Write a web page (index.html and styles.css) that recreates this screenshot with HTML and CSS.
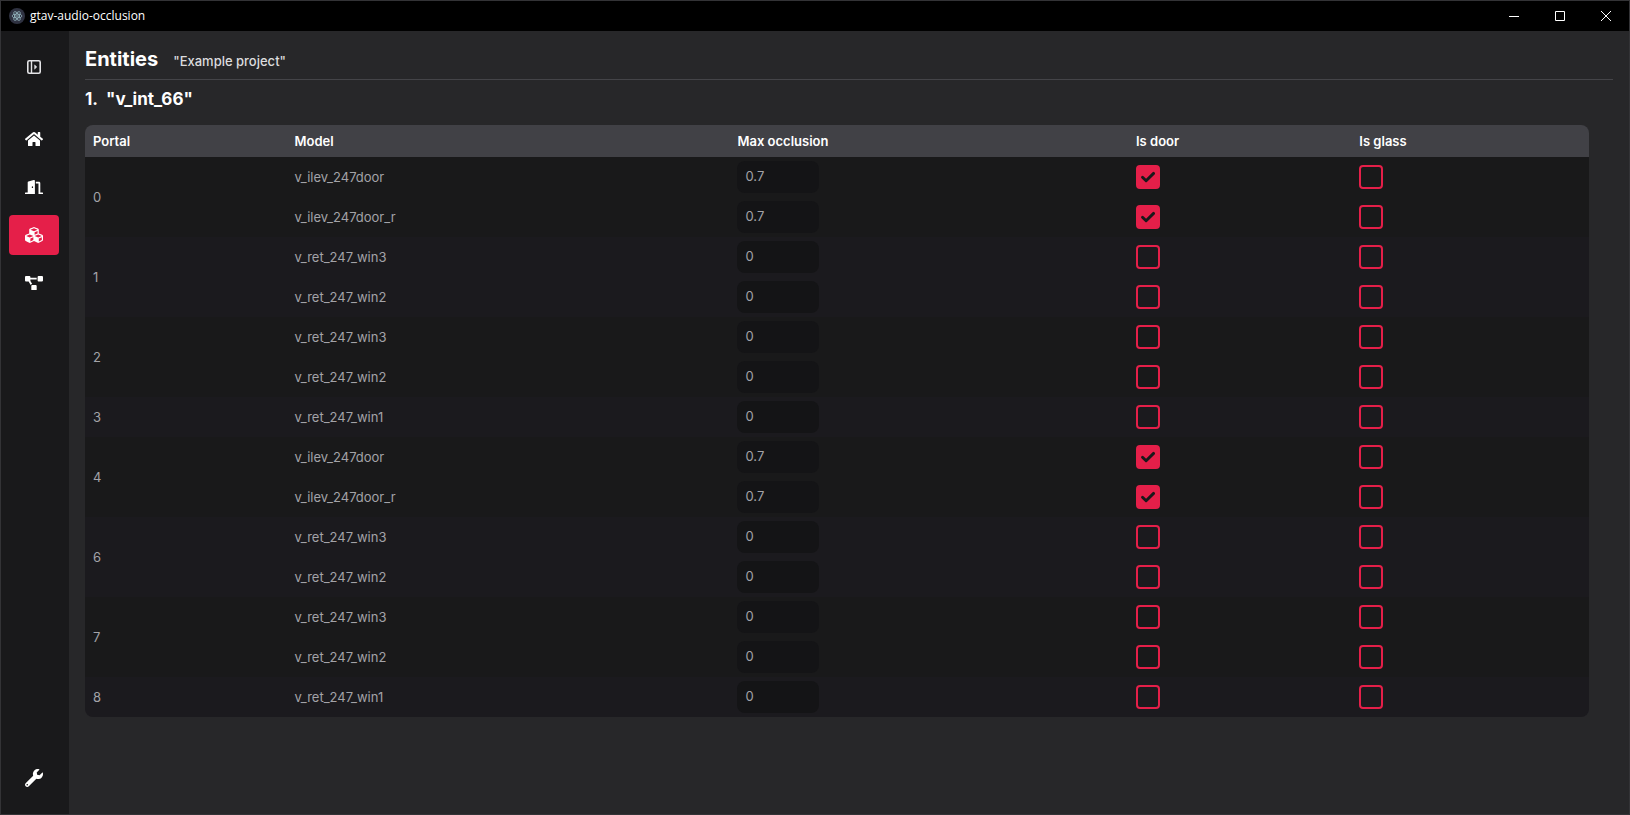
FILE: index.html
```html
<!DOCTYPE html>
<html lang="en">
<head>
<meta charset="utf-8">
<title>gtav-audio-occlusion</title>
<link rel="stylesheet" href="styles.css">
</head>
<body>
<div class="window">
  <header class="titlebar">
    <svg class="app-icon" viewBox="0 0 16 16" aria-hidden="true">
      <circle cx="8" cy="8" r="8" fill="#2f3241"/>
      <g fill="none" stroke="#9fc3cc" stroke-width="0.7">
        <ellipse cx="8" cy="8" rx="5" ry="2"/>
        <ellipse cx="8" cy="8" rx="5" ry="2" transform="rotate(60 8 8)"/>
        <ellipse cx="8" cy="8" rx="5" ry="2" transform="rotate(120 8 8)"/>
      </g>
      <circle cx="8" cy="8" r="0.8" fill="#9fc3cc"/>
    </svg>
    <span class="app-name">gtav-audio-occlusion</span>
    <div class="window-controls">
      <button class="window-button" aria-label="Minimize"><svg viewBox="0 0 10 10"><path d="M0 5.5h10"/></svg></button>
      <button class="window-button" aria-label="Maximize"><svg viewBox="0 0 10 10"><path d="M.5.5h9v9h-9z"/></svg></button>
      <button class="window-button" aria-label="Close"><svg viewBox="0 0 10 10"><path d="M0 0l10 10M10 0L0 10"/></svg></button>
    </div>
  </header>
  <div class="body">
    <nav class="sidebar">
      <button class="nav-button toggle" aria-label="Expand sidebar">
        <svg class="toggle-icon" viewBox="0 0 14 14"><rect x=".8" y=".8" width="12.4" height="12.4" rx="1.5" fill="none" stroke="currentColor" stroke-width="1.6"/><path d="M4.500 1v12" stroke="currentColor" stroke-width="1.4"/><path d="M7.600 4.800L9.800 7L7.600 9.200z" fill="currentColor" stroke="currentColor" stroke-width=".5"/></svg>
      </button>
      <button class="nav-button" aria-label="Home">
        <svg viewBox="0 0 576 512"><path d="M280.37 148.26L96 300.11V464a16 16 0 0 0 16 16l112.06-.29a16 16 0 0 0 15.92-16V368a16 16 0 0 1 16-16h64a16 16 0 0 1 16 16v95.64a16 16 0 0 0 16 16.05L464 480a16 16 0 0 0 16-16V300L295.67 148.26a12.19 12.19 0 0 0-15.3 0zM571.6 251.47L488 182.56V44.05a12 12 0 0 0-12-12h-56a12 12 0 0 0-12 12v72.61L318.47 43a48 48 0 0 0-61 0L4.34 251.47a12 12 0 0 0-1.6 16.9l25.5 31A12 12 0 0 0 45.15 301l235.22-193.74a12.19 12.19 0 0 1 15.3 0L530.9 301a12 12 0 0 0 16.9-1.6l25.5-31a12 12 0 0 0-1.7-16.93z"/></svg>
      </button>
      <button class="nav-button" aria-label="Portals">
        <svg viewBox="0 0 640 512"><path d="M624 448h-80V113.45C544 86.19 522.47 64 496 64H384v64h96v384h144c8.84 0 16-7.16 16-16v-32c0-8.84-7.16-16-16-16zM312.24 1.01l-192 49.74C105.99 54.44 96 67.7 96 82.92V448H16c-8.84 0-16 7.16-16 16v32c0 8.84 7.16 16 16 16h336V33.18c0-21.58-19.56-37.41-39.76-32.17zM264 288c-13.25 0-24-14.33-24-32s10.75-32 24-32 24 14.33 24 32-10.75 32-24 32z"/></svg>
      </button>
      <button class="nav-button active" aria-label="Entities" aria-current="page">
        <svg viewBox="0 0 512 512"><path d="M488.6 250.2L392 214V105.5c0-15-9.3-28.4-23.4-33.7l-100-37.5c-8.1-3.1-17.1-3.1-25.3 0l-100 37.5c-14.1 5.3-23.4 18.7-23.4 33.7V214l-96.6 36.2C9.3 255.5 0 268.9 0 283.9V394c0 13.6 7.7 26.1 19.9 32.2l100 50c10.1 5.1 22.1 5.1 32.2 0l103.9-52 103.9 52c10.1 5.1 22.1 5.1 32.2 0l100-50c12.2-6.1 19.9-18.6 19.9-32.2V283.9c0-15-9.3-28.4-23.4-33.7zM358 214.8l-85 31.9v-68.2l85-37v73.3zM154 104.1l102-38.2 102 38.2v.6l-102 41.4-102-41.4v-.6zm84 291.1l-85 42.5v-79.1l85-38.8v75.4zm0-112l-102 41.4-102-41.4v-.6l102-38.2 102 38.2v.6zm240 112l-85 42.5v-79.1l85-38.8v75.4zm0-112l-102 41.4-102-41.4v-.6l102-38.2 102 38.2v.6z"/></svg>
      </button>
      <button class="nav-button" aria-label="Rooms">
        <svg viewBox="0 0 640 512"><path d="M384 320H256c-17.67 0-32 14.33-32 32v128c0 17.67 14.33 32 32 32h128c17.67 0 32-14.33 32-32V352c0-17.67-14.33-32-32-32zM192 32c0-17.67-14.33-32-32-32H32C14.33 0 0 14.33 0 32v128c0 17.67 14.33 32 32 32h95.72l73.16 128.04C211.98 300.98 232.4 288 256 288h.28L192 175.51V128h224V64H192V32zM608 0H480c-17.67 0-32 14.33-32 32v128c0 17.67 14.33 32 32 32h128c17.67 0 32-14.33 32-32V32c0-17.67-14.33-32-32-32z"/></svg>
      </button>
      <button class="nav-button settings" aria-label="Settings">
        <svg viewBox="0 0 512 512"><path d="M507.73 109.1c-2.24-9.03-13.54-12.09-20.12-5.51l-74.36 74.36-67.88-11.31-11.31-67.88 74.36-74.36c6.62-6.62 3.43-17.9-5.66-20.16-47.38-11.74-99.55.91-136.58 37.93-39.64 39.64-50.55 97.1-34.05 147.2L18.74 402.76c-24.99 24.99-24.99 65.51 0 90.5 24.99 24.99 65.51 24.99 90.5 0l213.21-213.21c50.12 16.71 107.47 5.68 147.37-34.22 37.07-37.07 49.7-89.32 37.91-136.73zM64 472c-13.25 0-24-10.75-24-24 0-13.26 10.75-24 24-24s24 10.74 24 24c0 13.25-10.75 24-24 24z"/></svg>
      </button>
    </nav>
    <main class="content">
      <div class="page-header">
        <h1>Entities</h1>
        <span class="project">"Example project"</span>
      </div>
      <section class="interior">
        <h2><span>1.</span><span>"v_int_66"</span></h2>
        <table class="entities">
          <colgroup><col class="col-portal"><col class="col-model"><col class="col-occlusion"><col class="col-door"><col></colgroup>
          <thead>
            <tr><th>Portal</th><th>Model</th><th>Max occlusion</th><th>Is door</th><th>Is glass</th></tr>
          </thead>
          <tbody><tr><td rowspan="2">0</td><td>v_ilev_247door</td><td><input class="number" type="text" aria-label="Max occlusion" value="0.7"></td><td><input class="check" type="checkbox" aria-label="Is door" checked></td><td><input class="check" type="checkbox" aria-label="Is glass"></td></tr>
          <tr><td>v_ilev_247door_r</td><td><input class="number" type="text" aria-label="Max occlusion" value="0.7"></td><td><input class="check" type="checkbox" aria-label="Is door" checked></td><td><input class="check" type="checkbox" aria-label="Is glass"></td></tr></tbody>
          <tbody><tr><td rowspan="2">1</td><td>v_ret_247_win3</td><td><input class="number" type="text" aria-label="Max occlusion" value="0"></td><td><input class="check" type="checkbox" aria-label="Is door"></td><td><input class="check" type="checkbox" aria-label="Is glass"></td></tr>
          <tr><td>v_ret_247_win2</td><td><input class="number" type="text" aria-label="Max occlusion" value="0"></td><td><input class="check" type="checkbox" aria-label="Is door"></td><td><input class="check" type="checkbox" aria-label="Is glass"></td></tr></tbody>
          <tbody><tr><td rowspan="2">2</td><td>v_ret_247_win3</td><td><input class="number" type="text" aria-label="Max occlusion" value="0"></td><td><input class="check" type="checkbox" aria-label="Is door"></td><td><input class="check" type="checkbox" aria-label="Is glass"></td></tr>
          <tr><td>v_ret_247_win2</td><td><input class="number" type="text" aria-label="Max occlusion" value="0"></td><td><input class="check" type="checkbox" aria-label="Is door"></td><td><input class="check" type="checkbox" aria-label="Is glass"></td></tr></tbody>
          <tbody><tr><td>3</td><td>v_ret_247_win1</td><td><input class="number" type="text" aria-label="Max occlusion" value="0"></td><td><input class="check" type="checkbox" aria-label="Is door"></td><td><input class="check" type="checkbox" aria-label="Is glass"></td></tr></tbody>
          <tbody><tr><td rowspan="2">4</td><td>v_ilev_247door</td><td><input class="number" type="text" aria-label="Max occlusion" value="0.7"></td><td><input class="check" type="checkbox" aria-label="Is door" checked></td><td><input class="check" type="checkbox" aria-label="Is glass"></td></tr>
          <tr><td>v_ilev_247door_r</td><td><input class="number" type="text" aria-label="Max occlusion" value="0.7"></td><td><input class="check" type="checkbox" aria-label="Is door" checked></td><td><input class="check" type="checkbox" aria-label="Is glass"></td></tr></tbody>
          <tbody><tr><td rowspan="2">6</td><td>v_ret_247_win3</td><td><input class="number" type="text" aria-label="Max occlusion" value="0"></td><td><input class="check" type="checkbox" aria-label="Is door"></td><td><input class="check" type="checkbox" aria-label="Is glass"></td></tr>
          <tr><td>v_ret_247_win2</td><td><input class="number" type="text" aria-label="Max occlusion" value="0"></td><td><input class="check" type="checkbox" aria-label="Is door"></td><td><input class="check" type="checkbox" aria-label="Is glass"></td></tr></tbody>
          <tbody><tr><td rowspan="2">7</td><td>v_ret_247_win3</td><td><input class="number" type="text" aria-label="Max occlusion" value="0"></td><td><input class="check" type="checkbox" aria-label="Is door"></td><td><input class="check" type="checkbox" aria-label="Is glass"></td></tr>
          <tr><td>v_ret_247_win2</td><td><input class="number" type="text" aria-label="Max occlusion" value="0"></td><td><input class="check" type="checkbox" aria-label="Is door"></td><td><input class="check" type="checkbox" aria-label="Is glass"></td></tr></tbody>
          <tbody><tr><td>8</td><td>v_ret_247_win1</td><td><input class="number" type="text" aria-label="Max occlusion" value="0"></td><td><input class="check" type="checkbox" aria-label="Is door"></td><td><input class="check" type="checkbox" aria-label="Is glass"></td></tr></tbody>
        </table>
      </section>
    </main>
  </div>
</div>
</body>
</html>
```
FILE: styles.css
```css
* { box-sizing: border-box; }

body {
  margin: 0;
  background: #272729;
  color: #fff;
  font-family: Inter, "Liberation Sans", sans-serif;
  font-size: 13px;
  line-height: 20px;
}

button {
  margin: 0;
  padding: 0;
  border: 0;
  background: none;
  color: inherit;
  font: inherit;
}

.window {
  display: flex;
  flex-direction: column;
  min-height: 100vh;
  border: 1px solid #333336;
}

/* Title bar */
.titlebar {
  display: flex;
  align-items: center;
  height: 30px;
  padding-left: 8px;
  gap: 5px;
  background: #000;
}

.app-icon { width: 16px; height: 16px; }

.app-name {
  font-family: "Open Sans", "Noto Sans", sans-serif;
  font-size: 12px;
  line-height: 16px;
}

.window-controls { display: flex; height: 100%; margin-left: auto; }

.window-button {
  display: grid;
  place-items: center;
  width: 46px;
  height: 100%;
}

.window-button svg {
  width: 10px;
  height: 10px;
  fill: none;
  stroke: #fff;
  stroke-width: 1;
}

/* Sidebar */
.body { display: flex; flex: 1; }

.sidebar {
  display: flex;
  flex-direction: column;
  gap: 8px;
  flex: none;
  padding: 16px 10px 16px 8px;
  background: #19191b;
}

.nav-button {
  display: grid;
  place-items: center;
  width: 50px;
  height: 40px;
  border-radius: 4px;
}

.nav-button svg { width: 18px; fill: currentColor; }
.nav-button .toggle-icon { width: 14px; height: 14px; }
.toggle { margin-bottom: 24px; color: #e4e4e7; }
.active { background: #e51f49; }
.settings { margin-top: auto; }

/* Content */
.content { flex: 1; min-width: 0; padding: 12px 16px; }

.page-header {
  display: flex;
  align-items: baseline;
  gap: 15px;
  padding-bottom: 4px;
  border-bottom: 1px solid #444448;
}

h1 { margin: 0; font-size: 20px; line-height: 32px; font-weight: 700; }
.project { color: #dcdcde; font-weight: 500; }

.interior { padding: 5px 24px 0 0; }

h2 {
  display: flex;
  gap: 8px;
  margin: 0 0 11px;
  font-size: 17px;
  line-height: 29px;
  font-weight: 700;
}

.entities {
  width: 100%;
  table-layout: fixed;
  border-collapse: collapse;
  border-radius: 8px;
  overflow: hidden;
}

.col-portal { width: 13.4%; }
.col-model { width: 29.45%; }
.col-occlusion { width: 26.5%; }
.col-door { width: 14.85%; }

thead { background: #414146; }
tbody { background: #19191a; color: #a3a3a8; }
tbody:nth-of-type(even) { background: #1b1a1e; }

th {
  height: 32px;
  padding: 0 8px;
  text-align: left;
  font-weight: 600;
}

td { height: 40px; padding: 0 8px; }

.number {
  display: block;
  width: 82px;
  height: 32px;
  padding: 0 8px 2px;
  border: 0;
  border-radius: 8px;
  background: #141416;
  color: inherit;
  font: inherit;
}

.check {
  appearance: none;
  display: block;
  width: 24px;
  height: 24px;
  margin: 0;
  border: 2px solid #e51f49;
  border-radius: 4px;
}

.check:checked {
  background: #e51f49 url("data:image/svg+xml,%3Csvg xmlns='http://www.w3.org/2000/svg' viewBox='0 0 20 20'%3E%3Cpath d='M4.500 10.200l3.600 3.600L15.600 6.400' fill='none' stroke='%2319191a' stroke-width='2.900' stroke-linecap='round' stroke-linejoin='round'/%3E%3C/svg%3E") center / 20px 20px no-repeat;
}
```
